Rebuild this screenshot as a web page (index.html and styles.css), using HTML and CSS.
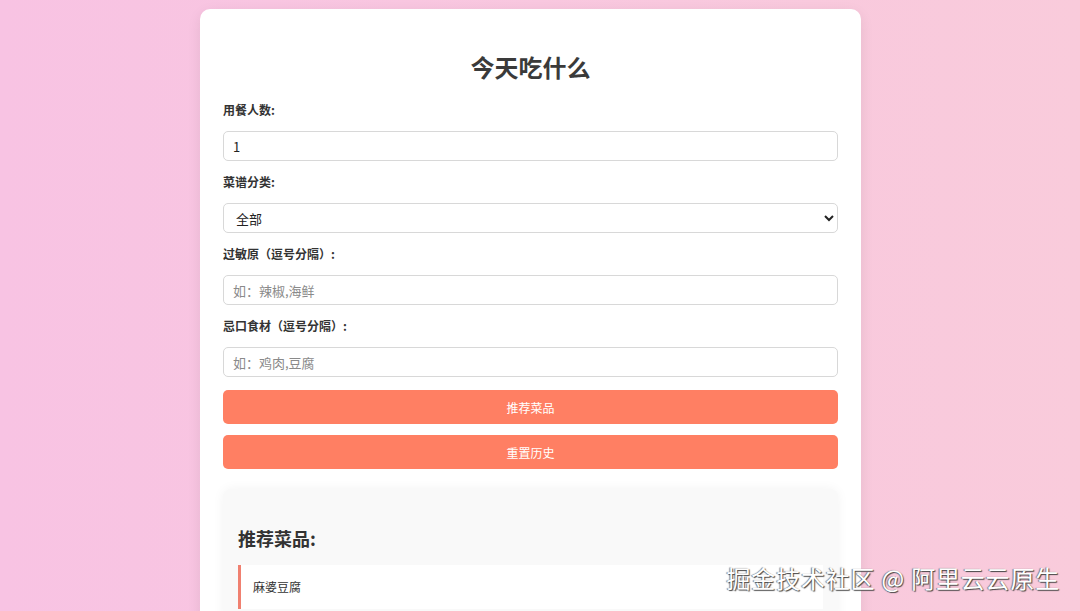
FILE: index.html
```html
<!DOCTYPE html>
<html lang="zh-CN">
<head>
  <meta charset="UTF-8" />
  <meta name="viewport" content="width=device-width, initial-scale=1.0" />
  <title>今天吃什么</title>
  <link rel="stylesheet" href="styles.css">
</head>
<body>
  <div class="container">
    <h1>今天吃什么</h1>

    <div class="form-group">
      <label for="people">用餐人数:</label>
      <input type="number" id="people" value="1" />
    </div>
    <div class="form-group">
      <label for="category">菜谱分类:</label>
      <select id="category">
        <option>全部</option>
      </select>
    </div>
    <div class="form-group">
      <label for="allergens">过敏原（逗号分隔）:</label>
      <input type="text" id="allergens" placeholder="如：辣椒,海鲜" />
    </div>
    <div class="form-group">
      <label for="avoid">忌口食材（逗号分隔）:</label>
      <input type="text" id="avoid" placeholder="如：鸡肉,豆腐" />
    </div>

    <button class="btn">推荐菜品</button>
    <button class="btn">重置历史</button>

    <div class="result">
      <h3>推荐菜品:</h3>
      <div class="dish">麻婆豆腐</div>
    </div>
  </div>

  <div class="watermark">掘金技术社区 @ 阿里云云原生</div>
</body>
</html>
```

FILE: styles.css
```css
html, body {
  height: 100%;
}

body {
  margin: 0;
  padding: 0;
  font-family: 'Noto Sans CJK SC', 'Noto Sans', sans-serif;
  background: linear-gradient(to right, #f8c3e3, #f9cbdb);
  overflow: hidden;
  color: #333;
}

.container {
  width: 615px;
  margin: 9px 0 0 200px;
  padding: 23px;
  background: #fff;
  border-radius: 10px;
  box-shadow: 0 4px 14px rgba(0, 0, 0, 0.08);
}

h1 {
  margin: 20px 0 20px;
  font-size: 24px;
  line-height: 30px;
  text-align: center;
  color: #3a3a3a;
}

.form-group {
  margin-bottom: 13px;
}

.form-group label {
  display: block;
  font-size: 12px;
  line-height: 16px;
  font-weight: bold;
  margin-bottom: 13px;
}

.form-group input,
.form-group select {
  display: block;
  width: 100%;
  height: 30px;
  box-sizing: border-box;
  padding: 0 9px;
  font-family: inherit;
  font-size: 13px;
  color: #222;
  border: 1px solid #d8d8d8;
  border-radius: 5px;
  background: #fff;
}

.form-group select {
  padding: 0 8px;
}

.form-group input::placeholder {
  color: #8a8a8a;
}

.btn {
  display: block;
  width: 100%;
  height: 34px;
  margin-bottom: 11px;
  border: none;
  border-radius: 5px;
  background: #ff7f63;
  color: #fff;
  font-family: inherit;
  font-size: 12px;
  cursor: pointer;
}

.result {
  margin-top: 20px;
  padding: 15px;
  background: #f9f9f9;
  border-radius: 8px;
  box-shadow: 0 0 12px rgba(0, 0, 0, 0.05);
}

.result h3 {
  margin: 22px 0 15px;
  font-size: 18px;
  line-height: 24px;
}

.dish {
  padding: 14px 12px;
  font-size: 12px;
  line-height: 16px;
  background: #fff;
  border-left: 3px solid #f08070;
}

.watermark {
  position: absolute;
  right: 20px;
  bottom: 19px;
  font-size: 24px;
  line-height: 28px;
  letter-spacing: 0.8px;
  color: #fff;
  text-shadow: 1px 1px 1px #444, -1px 0 1px #777;
}
```
